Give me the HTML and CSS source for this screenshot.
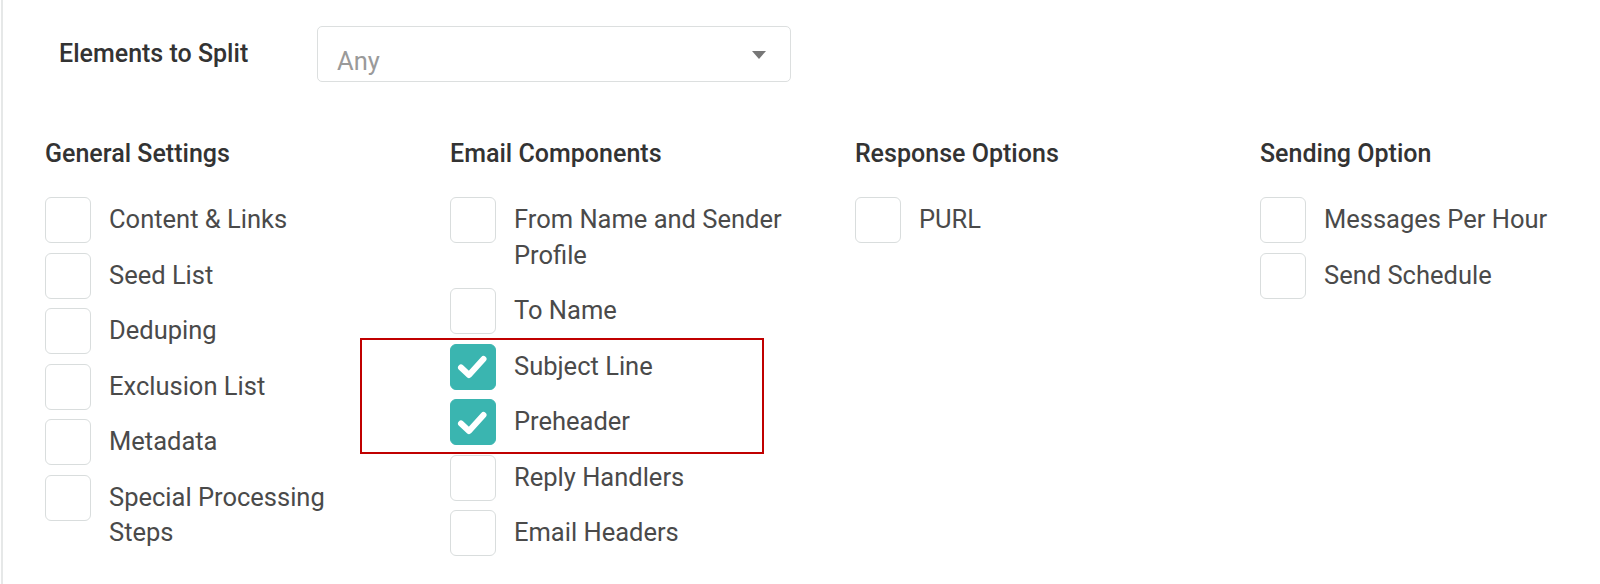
FILE: index.html
```html
<!DOCTYPE html>
<html>
<head>
<meta charset="utf-8">
<link rel="stylesheet" href="styles.css">
</head>
<body>
<div class="panel">
  <div class="split-row">
    <div class="split-label">Elements to Split</div>
    <div class="select">
      <span class="select-value">Any</span>
      <span class="caret"></span>
    </div>
  </div>
  <div class="groups">
    <div class="group">
      <div class="group-title">General Settings</div>
      <div class="opt"><span class="box"></span><span class="text">Content &amp; Links</span></div>
      <div class="opt"><span class="box"></span><span class="text">Seed List</span></div>
      <div class="opt"><span class="box"></span><span class="text">Deduping</span></div>
      <div class="opt"><span class="box"></span><span class="text">Exclusion List</span></div>
      <div class="opt"><span class="box"></span><span class="text">Metadata</span></div>
      <div class="opt"><span class="box"></span><span class="text">Special Processing Steps</span></div>
    </div>
    <div class="group">
      <div class="group-title">Email Components</div>
      <div class="opt"><span class="box"></span><span class="text">From Name and Sender Profile</span></div>
      <div class="opt"><span class="box"></span><span class="text">To Name</span></div>
      <div class="highlight">
        <div class="opt"><span class="box checked"><svg viewBox="0 0 46 46" width="46" height="46"><path d="M11 24.5 L19 32 L33.5 16" fill="none" stroke="#fff" stroke-width="6" stroke-linecap="round" stroke-linejoin="round"/></svg></span><span class="text">Subject Line</span></div>
        <div class="opt"><span class="box checked"><svg viewBox="0 0 46 46" width="46" height="46"><path d="M11 24.5 L19 32 L33.5 16" fill="none" stroke="#fff" stroke-width="6" stroke-linecap="round" stroke-linejoin="round"/></svg></span><span class="text">Preheader</span></div>
      </div>
      <div class="opt"><span class="box"></span><span class="text">Reply Handlers</span></div>
      <div class="opt"><span class="box"></span><span class="text">Email Headers</span></div>
    </div>
    <div class="group">
      <div class="group-title">Response Options</div>
      <div class="opt"><span class="box"></span><span class="text">PURL</span></div>
    </div>
    <div class="group">
      <div class="group-title">Sending Option</div>
      <div class="opt"><span class="box"></span><span class="text">Messages Per Hour</span></div>
      <div class="opt"><span class="box"></span><span class="text">Send Schedule</span></div>
    </div>
  </div>
</div>
</body>
</html>
```
FILE: styles.css
```css
* { box-sizing: border-box; }
html, body { margin: 0; padding: 0; background: #fff; }
body {
  font-family: Roboto, "Liberation Sans", sans-serif;
  width: 1600px;
  height: 584px;
  overflow: hidden;
}
.panel {
  height: 584px;
  margin-left: 1px;
  border-left: 2px solid #e6e8e8;
  padding-left: 42px;
}
.split-row {
  display: flex;
  align-items: center;
  padding-top: 26px;
}
.split-label {
  width: 272px;
  padding-left: 14px;
  padding-bottom: 2px;
  font-family: "Roboto Medium", Roboto, "Liberation Sans", sans-serif;
  font-size: 25px;
  font-weight: 500;
  color: #333;
}
.select {
  position: relative;
  width: 474px;
  height: 56px;
  border: 1.5px solid #dcdfdf;
  border-radius: 5px;
  display: flex;
  align-items: center;
  padding: 13px 0 0 19px;
}
.select-value {
  font-size: 25.5px;
  color: #9a9a9a;
}
.caret {
  position: absolute;
  right: 24px;
  top: 24px;
  width: 0;
  height: 0;
  border-left: 7.5px solid transparent;
  border-right: 7.5px solid transparent;
  border-top: 8px solid #777;
}
.groups {
  display: grid;
  grid-template-columns: repeat(4, 405px);
  margin-top: 54px;
}
.group-title {
  font-family: "Roboto Medium", Roboto, "Liberation Sans", sans-serif;
  font-size: 25px;
  font-weight: 500;
  color: #333;
  line-height: 35px;
  margin-bottom: 26px;
}
.opt {
  display: flex;
  align-items: flex-start;
}
.box {
  flex: none;
  width: 46px;
  height: 46px;
  border: 1.5px solid #d9dddd;
  border-radius: 6px;
  background: #fff;
}
.box.checked {
  background: #3ab5b0;
  border-color: #3ab5b0;
  position: relative;
}
.box.checked svg {
  position: absolute;
  left: -1.5px;
  top: -1.5px;
}
.text {
  max-width: 276px;
  margin-left: 18px;
  padding-top: 5px;
  padding-bottom: 15px;
  font-size: 25.5px;
  line-height: 35.5px;
  color: #4a4a4a;
}
.highlight {
  position: relative;
}
.highlight::before {
  content: "";
  position: absolute;
  left: -90px;
  top: -6px;
  width: 400px;
  height: 112px;
  border: 2px solid #c00000;
  pointer-events: none;
}
```
